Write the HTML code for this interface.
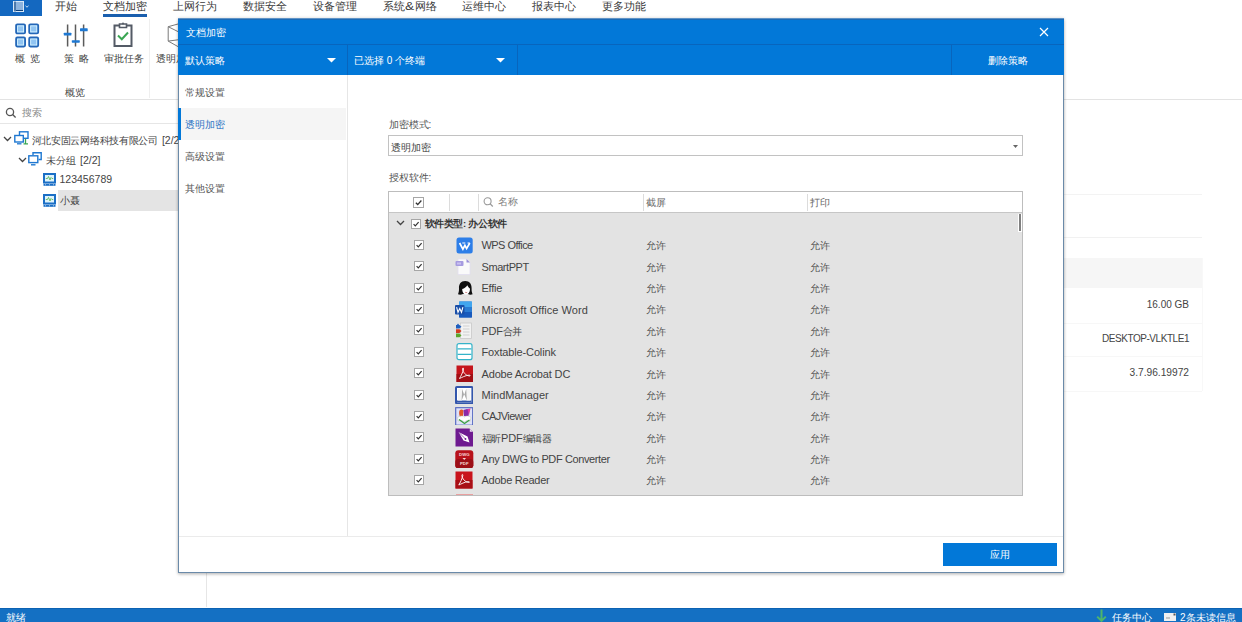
<!DOCTYPE html>
<html><head><meta charset="utf-8">
<style>
*{margin:0;padding:0;box-sizing:border-box}
html,body{width:1242px;height:622px;overflow:hidden;background:#fff;font-family:"Liberation Sans",sans-serif;color:#333}
body{position:relative}
.a{position:absolute;white-space:nowrap}
.mi{font-size:11px;line-height:12px;color:#3a3a3a;top:0}
.rl{font-size:10px;line-height:12px;color:#444}
.wt{color:#fff;font-size:10px;line-height:12px}
.t10{font-size:10px;line-height:12px;color:#555}
.nm{font-size:11px;line-height:12px;color:#444;letter-spacing:-0.45px}
.al{font-size:10px;line-height:12px;color:#555}
.ln{background:#e8e8e8}
</style></head><body>

<div class="a" style="left:0;top:0;width:42px;height:16px;background:#1468c0"></div>
<svg class="a" style="left:12px;top:0" width="20" height="13" viewBox="0 0 20 13"><rect x="1.5" y="1.5" width="10" height="10" fill="#8db3dd" stroke="#d8e8f8" stroke-width="1"/><path d="M3 1.5 V11.5" stroke="#0b3f7a" stroke-width="1"/><path d="M4 10.5 H11" stroke="#0b3f7a" stroke-width="1"/><path d="M13.5 5.8 L15 7.2 L16.5 5.8" fill="none" stroke="#cfe3f7" stroke-width="1"/></svg>
<div class="a mi" style="left:55px">开始</div>
<div class="a mi" style="left:103px">文档加密</div>
<div class="a mi" style="left:173px">上网行为</div>
<div class="a mi" style="left:243px">数据安全</div>
<div class="a mi" style="left:312.5px">设备管理</div>
<div class="a mi" style="left:382.5px">系统<span style="letter-spacing:0">&amp;</span>网络</div>
<div class="a mi" style="left:462px">运维中心</div>
<div class="a mi" style="left:532px">报表中心</div>
<div class="a mi" style="left:602px">更多功能</div>
<div class="a" style="left:103px;top:14px;width:44px;height:2.5px;background:#1a5fae"></div>
<style>.mi span{display:inline-block;transform:scaleX(1.25);margin:0 1.5px}</style>
<svg class="a" style="left:15px;top:23px" width="25" height="25" viewBox="0 0 25 25"><g fill="#90c4f2" stroke="#2467b8" stroke-width="1.8"><rect x="1.1" y="1.4" width="9" height="9" rx="1.2"/><rect x="14.2" y="1.4" width="9" height="9" rx="1.2"/><rect x="1.1" y="14.5" width="9" height="9" rx="1.2"/><rect x="14.2" y="14.5" width="9" height="9" rx="1.2"/></g><g fill="none" stroke="#d8f4ff" stroke-width="0.8"><rect x="2.6" y="2.9" width="6" height="6"/><rect x="15.7" y="2.9" width="6" height="6"/><rect x="2.6" y="16" width="6" height="6"/><rect x="15.7" y="16" width="6" height="6"/></g></svg>
<svg class="a" style="left:62px;top:22px" width="28" height="26" viewBox="0 0 28 26"><g stroke="#5b5b5b" stroke-width="1.5"><path d="M5.6 2.5 V24.5 M13.5 2.5 V24.5 M21.6 2.5 V24.5"/></g><g fill="#1e78d2"><rect x="1.8" y="10.7" width="7.6" height="2.8" rx="0.6"/><rect x="9.8" y="18.2" width="8" height="2.5" rx="0.6"/><rect x="18" y="6.3" width="7.7" height="3" rx="0.6"/></g></svg>
<svg class="a" style="left:112px;top:22px" width="22" height="26" viewBox="0 0 22 26"><path d="M7.5 3.5 H2.5 V24 H19.5 V3.5 H14.5" fill="none" stroke="#545b66" stroke-width="2"/><path d="M7.5 2 H14.5 V5.5 H7.5 Z" fill="none" stroke="#545b66" stroke-width="1.6"/><circle cx="11" cy="1.6" r="1" fill="#545b66"/><path d="M6 13.5 L9.8 17.2 L16 10.5" fill="none" stroke="#3aa653" stroke-width="2"/></svg>
<svg class="a" style="left:166px;top:22px" width="14" height="26" viewBox="0 0 14 26"><path d="M2.2 4.7 L12 2 M2.2 4.7 V19.1 L12 24.6 M2.2 4.7 L12 9.6 M2.2 19.1 L12 17.8" fill="none" stroke="#7a7a7a" stroke-width="1"/></svg>
<div class="a rl" style="left:15px;top:52.5px">概&ensp;览</div>
<div class="a rl" style="left:63.5px;top:52.5px">策&ensp;略</div>
<div class="a rl" style="left:104px;top:52.5px">审批任务</div>
<div class="a rl" style="left:155.5px;top:52.5px">透明加密</div>
<div class="a rl" style="left:64.5px;top:87px">概览</div>
<div class="a ln" style="left:149px;top:19px;width:1px;height:79px;background:#efefef"></div>
<div class="a ln" style="left:0;top:99px;width:1242px;height:1px;background:#e3e3e3"></div>
<svg class="a" style="left:5px;top:107px" width="12" height="12" viewBox="0 0 12 12"><circle cx="5" cy="5" r="3.6" fill="none" stroke="#555" stroke-width="1.3"/><path d="M7.6 7.6 L10.6 10.6" stroke="#555" stroke-width="1.4"/></svg>
<div class="a rl" style="left:22px;top:106.5px;color:#8a8a8a">搜索</div>
<div class="a ln" style="left:0;top:122.5px;width:206px;height:1px;background:#e6e6e6"></div>
<div class="a ln" style="left:206px;top:100px;width:1px;height:507px;background:#e6e6e6"></div>
<svg class="a" style="left:3px;top:135.5px" width="9" height="6" viewBox="0 0 9 6"><path d="M1 1 L4.5 4.5 L8 1" fill="none" stroke="#444" stroke-width="1.3"/></svg>
<svg class="a" style="left:14px;top:131px" width="15" height="14" viewBox="0 0 15 14"><rect x="5.5" y="0.8" width="8.5" height="6.5" fill="#fff" stroke="#1f78d1" stroke-width="1.4"/><rect x="0.8" y="4.5" width="8.5" height="6.5" fill="#fff" stroke="#1f78d1" stroke-width="1.4"/><path d="M3 12.8 H7.5" stroke="#1f78d1" stroke-width="1.3"/><path d="M11.5 8 V12.8 M9.5 12.8 H14" stroke="#3aa653" stroke-width="1.3"/></svg>
<div class="a rl" style="left:31.5px;top:133.5px;font-size:10px;color:#444;letter-spacing:-0.28px">河北安固云网络科技有限公司<span style="font-size:10.5px;margin-left:4px;letter-spacing:0">[2/2]</span></div>
<svg class="a" style="left:18px;top:157px" width="9" height="6" viewBox="0 0 9 6"><path d="M1 1 L4.5 4.5 L8 1" fill="none" stroke="#444" stroke-width="1.3"/></svg>
<svg class="a" style="left:28px;top:151.5px" width="14" height="14" viewBox="0 0 14 14"><path d="M5 3 V0.8 H13.2 V7.5 H10.5" fill="none" stroke="#1f78d1" stroke-width="1.4"/><rect x="0.8" y="3.8" width="9" height="6.8" fill="#fff" stroke="#1f78d1" stroke-width="1.4"/><path d="M3 12.8 H7.5" stroke="#1f78d1" stroke-width="1.4"/></svg>
<div class="a rl" style="left:45.5px;top:153.5px;font-size:9.75px;color:#444">未分组<span style="font-size:10.5px;margin-left:4.5px">[2/2]</span></div>
<div class="a" style="left:57.5px;top:189.5px;width:120.5px;height:21px;background:#e4e4e4"></div>
<svg class="a" style="left:43px;top:173px" width="13" height="13" viewBox="0 0 13 13"><rect x="1" y="1" width="11" height="8.5" fill="#dff3fb" stroke="#1b6fc6" stroke-width="2"/><path d="M2.8 5.5 H4.5 L5.5 3.5 L7 7 L8 4.5 L9 5.5 H10.2" fill="none" stroke="#5db85a" stroke-width="0.9"/><rect x="0.5" y="10.8" width="12" height="2" fill="#1b6fc6"/><path d="M2 11.8 H3 M6 11.8 H7 M10 11.8 H11" stroke="#cfe6f7" stroke-width="0.8"/></svg>
<svg class="a" style="left:43px;top:194px" width="13" height="13" viewBox="0 0 13 13"><rect x="1" y="1" width="11" height="8.5" fill="#dff3fb" stroke="#1b6fc6" stroke-width="2"/><path d="M2.8 5.5 H4.5 L5.5 3.5 L7 7 L8 4.5 L9 5.5 H10.2" fill="none" stroke="#5db85a" stroke-width="0.9"/><rect x="0.5" y="10.8" width="12" height="2" fill="#1b6fc6"/><path d="M2 11.8 H3 M6 11.8 H7 M10 11.8 H11" stroke="#cfe6f7" stroke-width="0.8"/></svg>
<div class="a rl" style="left:59.5px;top:173px;font-size:10.5px;color:#444">123456789</div>
<div class="a rl" style="left:60px;top:194.5px;font-size:10px;color:#444">小聂</div>
<div class="a" style="left:1063px;top:193.5px;width:139px;height:1px;background:#f3f3f3"></div>
<div class="a" style="left:1063px;top:237px;width:139px;height:1px;background:#f1f1f1"></div>
<div class="a" style="left:1063px;top:257.5px;width:139px;height:30px;background:#f6f6f6"></div>
<div class="a" style="left:1063px;top:322.5px;width:139px;height:1px;background:#f7f7f7"></div>
<div class="a" style="left:1063px;top:355.5px;width:139px;height:1px;background:#f7f7f7"></div>
<div class="a" style="left:1063px;top:390.5px;width:139px;height:1px;background:#f7f7f7"></div>
<div class="a" style="left:1201.5px;top:257.5px;width:1px;height:133px;background:#f8f8f8"></div>
<div class="a" style="right:53px;top:299px;font-size:10px;line-height:12px;color:#444;letter-spacing:0px">16.00 GB</div>
<div class="a" style="right:53px;top:333px;font-size:10px;line-height:12px;color:#444;letter-spacing:-0.45px">DESKTOP-VLKTLE1</div>
<div class="a" style="right:53px;top:366.5px;font-size:10.2px;line-height:12px;color:#444;letter-spacing:0px">3.7.96.19972</div>
<div class="a" style="left:0;top:608px;width:1242px;height:14px;background:#1470c3"></div>
<div class="a" style="left:0;top:608px;width:1242px;height:1px;background:#0c62b3"></div>
<div class="a wt" style="left:6px;top:611.5px;font-size:10px">就绪</div>
<svg class="a" style="left:1096px;top:609px" width="11" height="13" viewBox="0 0 11 13"><path d="M5.5 0.5 V12 M1.2 7.6 L5.5 11.9 L9.8 7.6" fill="none" stroke="#4fb56a" stroke-width="2"/></svg>
<div class="a wt" style="left:1112px;top:611.5px;font-size:10px">任务中心</div>
<svg class="a" style="left:1164px;top:612.5px" width="12" height="8" viewBox="0 0 12 8"><rect x="0" y="0" width="12" height="8" fill="#f0f0f0"/><path d="M2 5 H6" stroke="#999" stroke-width="1"/><rect x="9.5" y="0.5" width="2" height="2" fill="#555"/></svg>
<div class="a wt" style="left:1180px;top:611.5px;font-size:10px">2条未读信息</div>
<div class="a" style="left:178px;top:18px;width:886px;height:555px;background:#fff;border:1px solid #6a8aa9;box-shadow:0 1.5px 3px rgba(0,0,0,.2), 0 0 3px rgba(0,0,0,.16)"></div>
<div class="a" style="left:178px;top:18px;width:886px;height:57px;background:#0278d8"></div>
<div class="a" style="left:178px;top:18px;width:886px;height:1px;background:#5f93c6"></div>
<div class="a" style="left:178px;top:19px;width:886px;height:1px;background:#1c6ab5"></div>
<div class="a" style="left:178px;top:44px;width:886px;height:1px;background:#0865bd"></div>
<div class="a wt" style="left:185.5px;top:26.5px">文档加密</div>
<svg class="a" style="left:1039px;top:27px" width="10" height="10" viewBox="0 0 10 10"><path d="M1 1 L9 9 M9 1 L1 9" stroke="#fff" stroke-width="1.2"/></svg>
<div class="a wt" style="left:185px;top:55px">默认策略</div>
<svg class="a" style="left:327px;top:58px" width="9" height="5" viewBox="0 0 9 5"><path d="M0 0 H9 L4.5 4.5 Z" fill="#fff"/></svg>
<svg class="a" style="left:496px;top:58px" width="9" height="5" viewBox="0 0 9 5"><path d="M0 0 H9 L4.5 4.5 Z" fill="#fff"/></svg>
<div class="a" style="left:347px;top:45px;width:1px;height:30px;background:#0865bd"></div>
<div class="a" style="left:516.5px;top:45px;width:1px;height:30px;background:#0865bd"></div>
<div class="a" style="left:951px;top:45px;width:1px;height:30px;background:#0865bd"></div>
<div class="a wt" style="left:354px;top:55px">已选择 0 个终端</div>
<div class="a wt" style="left:988px;top:54.5px">删除策略</div>
<div class="a" style="left:347px;top:75px;width:1px;height:461px;background:#e6e6e6"></div>
<div class="a" style="left:179px;top:108px;width:167px;height:32px;background:#f5f5f5"></div>
<div class="a" style="left:178px;top:108px;width:2.5px;height:32px;background:#0278d8"></div>
<div class="a t10" style="left:185px;top:86.5px;color:#555">常规设置</div>
<div class="a t10" style="left:185px;top:118.8px;color:#2b72c4">透明加密</div>
<div class="a t10" style="left:185px;top:151px;color:#555">高级设置</div>
<div class="a t10" style="left:185px;top:183px;color:#555">其他设置</div>
<div class="a t10" style="left:388.5px;top:118.5px">加密模式:</div>
<div class="a" style="left:388px;top:135px;width:635px;height:21px;border:1px solid #c2c2c2;background:#fff"></div>
<div class="a t10" style="left:390.5px;top:141.5px;color:#444">透明加密</div>
<svg class="a" style="left:1013px;top:144.5px" width="5" height="3" viewBox="0 0 5 3"><path d="M0 0 H5 L2.5 3 Z" fill="#666"/></svg>
<div class="a t10" style="left:388.5px;top:171.5px">授权软件:</div>
<div class="a" style="left:388px;top:191px;width:635px;height:305px;border:1px solid #bdbdbd;background:#e3e3e3"></div>
<div class="a" style="left:389px;top:192px;width:633px;height:20px;background:#fff"></div>
<div class="a" style="left:389px;top:212px;width:633px;height:1px;background:#c6c6c6"></div>
<div class="a" style="left:449px;top:194px;width:1px;height:17px;background:#dcdcdc"></div>
<div class="a" style="left:478px;top:194px;width:1px;height:17px;background:#dcdcdc"></div>
<div class="a" style="left:642.5px;top:194px;width:1px;height:17px;background:#dcdcdc"></div>
<div class="a" style="left:807px;top:194px;width:1px;height:17px;background:#dcdcdc"></div>
<div class="a" style="left:413px;top:197px;width:11px;height:11px;border:1px solid #a6a6a6;background:#fff"></div><svg class="a" style="left:413px;top:197px" width="11" height="11" viewBox="0 0 10 10"><path d="M2.6 5.2 L4.3 6.9 L7.6 3.2" fill="none" stroke="#333" stroke-width="1.2"/></svg>
<svg class="a" style="left:482.5px;top:196.5px" width="11" height="11" viewBox="0 0 11 11"><circle cx="4.6" cy="4.3" r="3.5" fill="none" stroke="#999" stroke-width="1.1"/><path d="M7.2 6.9 L9.8 9.5" stroke="#999" stroke-width="1.3"/></svg>
<div class="a al" style="left:498px;top:195.8px;color:#808080">名称</div>
<div class="a al" style="left:646px;top:196.5px;color:#666">截屏</div>
<div class="a al" style="left:810px;top:196.5px;color:#666">打印</div>
<div class="a" style="left:1018px;top:213.5px;width:4px;height:18px;background:#fff"></div>
<div class="a" style="left:1019px;top:214px;width:2px;height:17px;background:#808080"></div>
<svg class="a" style="left:395.5px;top:220px" width="9" height="6" viewBox="0 0 9 6"><path d="M1 1 L4.5 4.5 L8 1" fill="none" stroke="#444" stroke-width="1.3"/></svg>
<div class="a" style="left:410.5px;top:218.5px;width:10px;height:10px;border:1px solid #a6a6a6;background:#fff"></div><svg class="a" style="left:410.5px;top:218.5px" width="10" height="10" viewBox="0 0 10 10"><path d="M2.6 5.2 L4.3 6.9 L7.6 3.2" fill="none" stroke="#333" stroke-width="1.2"/></svg>
<div class="a" style="left:424.5px;top:218.3px;font-size:9.5px;line-height:12px;color:#333;font-weight:bold;letter-spacing:-0.35px">软件类型: 办公软件</div>
<div class="a" style="left:414px;top:239.9px;width:10px;height:10px;border:1px solid #a6a6a6;background:#fff"></div><svg class="a" style="left:414px;top:239.9px" width="10" height="10" viewBox="0 0 10 10"><path d="M2.6 5.2 L4.3 6.9 L7.6 3.2" fill="none" stroke="#333" stroke-width="1.2"/></svg>
<svg class="a" style="left:455.5px;top:236.6px" width="17" height="17" viewBox="0 0 17 17"><rect x="0.5" y="0.5" width="16.2" height="16" rx="2.5" fill="#2d7ee8"/><path d="M3.6 6 L6.9 12.2 L8.9 8.4 L10.6 11.6 L13.8 6" fill="none" stroke="#fff" stroke-width="1.7" stroke-linejoin="miter"/><path d="M6.3 6 H9.3 M11.5 6 H13.6" stroke="#fff" stroke-width="1"/></svg>
<div class="a nm" style="left:481.5px;top:239.4px;letter-spacing:-0.55px">WPS Office</div>
<div class="a al" style="left:646px;top:240.3px">允许</div>
<div class="a al" style="left:809.8px;top:240.3px">允许</div>
<div class="a" style="left:414px;top:261.2px;width:10px;height:10px;border:1px solid #a6a6a6;background:#fff"></div><svg class="a" style="left:414px;top:261.2px" width="10" height="10" viewBox="0 0 10 10"><path d="M2.6 5.2 L4.3 6.9 L7.6 3.2" fill="none" stroke="#333" stroke-width="1.2"/></svg>
<svg class="a" style="left:455px;top:258.2px" width="17" height="17" viewBox="0 0 17 17"><path d="M3 1 H11.5 L15 4.5 V16.5 H3 Z" fill="#fafafa" stroke="#e2def0" stroke-width="0.8"/><path d="M11.5 1 L15 4.5 H11.5 Z" fill="#9b8fd8"/><rect x="0.5" y="3" width="8" height="5" rx="1" fill="#a69be0"/><rect x="2" y="4.5" width="4" height="2" fill="#c9c1f0"/></svg>
<div class="a nm" style="left:481.5px;top:260.7px;letter-spacing:-0.43px">SmartPPT</div>
<div class="a al" style="left:646px;top:261.6px">允许</div>
<div class="a al" style="left:809.8px;top:261.6px">允许</div>
<div class="a" style="left:414px;top:282.6px;width:10px;height:10px;border:1px solid #a6a6a6;background:#fff"></div><svg class="a" style="left:414px;top:282.6px" width="10" height="10" viewBox="0 0 10 10"><path d="M2.6 5.2 L4.3 6.9 L7.6 3.2" fill="none" stroke="#333" stroke-width="1.2"/></svg>
<svg class="a" style="left:456.8px;top:279.8px" width="17" height="17" viewBox="0 0 17 17"><path d="M8.2 1 C3.8 1 1.8 4.2 2 8.2 C2.1 11 1.6 12.8 1 14.2 C2.8 15 4.6 14.6 5.8 14 L11 14 C12.2 14.6 14 15 15.6 14.2 C15 12.8 14.5 11 14.6 8.2 C14.8 4.2 12.6 1 8.2 1 Z" fill="#111"/><path d="M5.2 9 C7.5 8.5 9.3 6.8 10.3 5.2 C11.2 7 12.3 8.2 13 8.6 C13 12.2 11.4 14.6 9.2 14.6 C6.9 14.6 5.2 12.3 5.2 9 Z" fill="#fff"/><path d="M8.2 12.3 Q9.2 12.9 10.2 12.3" stroke="#a33" stroke-width="0.6" fill="none"/></svg>
<div class="a nm" style="left:481.5px;top:282.1px;letter-spacing:-0.25px">Effie</div>
<div class="a al" style="left:646px;top:283.0px">允许</div>
<div class="a al" style="left:809.8px;top:283.0px">允许</div>
<div class="a" style="left:414px;top:304.0px;width:10px;height:10px;border:1px solid #a6a6a6;background:#fff"></div><svg class="a" style="left:414px;top:304.0px" width="10" height="10" viewBox="0 0 10 10"><path d="M2.6 5.2 L4.3 6.9 L7.6 3.2" fill="none" stroke="#333" stroke-width="1.2"/></svg>
<svg class="a" style="left:455px;top:300.5px" width="18" height="17" viewBox="0 0 18 17"><rect x="4" y="0.5" width="13" height="16" rx="1" fill="#2b6fd0"/><rect x="4" y="0.5" width="13" height="5.5" fill="#41a5ee"/><rect x="4" y="6" width="13" height="5" fill="#2b7cd3"/><rect x="4" y="11" width="13" height="5.5" fill="#185abd"/><rect x="0" y="4" width="9.5" height="9.5" rx="1" fill="#1a4fa8"/><path d="M1.6 6.2 L3 11.3 L4.75 7.5 L6.5 11.3 L7.9 6.2" fill="none" stroke="#fff" stroke-width="1.1"/></svg>
<div class="a nm" style="left:481.5px;top:303.5px;letter-spacing:0.05px">Microsoft Office Word</div>
<div class="a al" style="left:646px;top:304.4px">允许</div>
<div class="a al" style="left:809.8px;top:304.4px">允许</div>
<div class="a" style="left:414px;top:325.4px;width:10px;height:10px;border:1px solid #a6a6a6;background:#fff"></div><svg class="a" style="left:414px;top:325.4px" width="10" height="10" viewBox="0 0 10 10"><path d="M2.6 5.2 L4.3 6.9 L7.6 3.2" fill="none" stroke="#333" stroke-width="1.2"/></svg>
<svg class="a" style="left:455px;top:321.7px" width="18" height="18" viewBox="0 0 18 18"><rect x="5.5" y="1" width="11" height="15.5" fill="#f2f2f2" stroke="#c9c9c9" stroke-width="0.8"/><path d="M8 4 H14.5 M8 7 H14.5 M8 10 H14.5 M8 13 H14.5" stroke="#d0d0d0" stroke-width="1"/><path d="M1 3 H4.5 L6.5 4.8 L4.5 6.6 H1 Z" fill="#1f5fbf"/><path d="M1 7.3 H4.5 L6.5 9.1 L4.5 10.9 H1 Z" fill="#d23a1e"/><path d="M1 11.6 H4.5 L6.5 13.4 L4.5 15.2 H1 Z" fill="#5aa52a"/><path d="M3 1.5 L4.2 3 H1.8 Z" fill="#1f5fbf"/></svg>
<div class="a nm" style="left:481.5px;top:324.9px;letter-spacing:-0.3px">PDF<span style="font-size:10px">合并</span></div>
<div class="a al" style="left:646px;top:325.8px">允许</div>
<div class="a al" style="left:809.8px;top:325.8px">允许</div>
<div class="a" style="left:414px;top:346.7px;width:10px;height:10px;border:1px solid #a6a6a6;background:#fff"></div><svg class="a" style="left:414px;top:346.7px" width="10" height="10" viewBox="0 0 10 10"><path d="M2.6 5.2 L4.3 6.9 L7.6 3.2" fill="none" stroke="#333" stroke-width="1.2"/></svg>
<svg class="a" style="left:455.5px;top:343.2px" width="17" height="17.5" viewBox="0 0 17 17.5"><rect x="1" y="0.7" width="15" height="16" rx="2" fill="#fff" stroke="#34b3c9" stroke-width="1.2"/><path d="M1.6 5.9 H15.4 M1.6 11.3 H15.4" stroke="#34b3c9" stroke-width="1.2"/></svg>
<div class="a nm" style="left:481.5px;top:346.2px;letter-spacing:-0.14px">Foxtable-Colink</div>
<div class="a al" style="left:646px;top:347.1px">允许</div>
<div class="a al" style="left:809.8px;top:347.1px">允许</div>
<div class="a" style="left:414px;top:368.1px;width:10px;height:10px;border:1px solid #a6a6a6;background:#fff"></div><svg class="a" style="left:414px;top:368.1px" width="10" height="10" viewBox="0 0 10 10"><path d="M2.6 5.2 L4.3 6.9 L7.6 3.2" fill="none" stroke="#333" stroke-width="1.2"/></svg>
<svg class="a" style="left:455.5px;top:364.6px" width="17.5" height="17.5" viewBox="0 0 17.5 17.5"><rect x="0.5" y="0.5" width="16.5" height="16.5" fill="#c5141b"/><rect x="0.5" y="9" width="16.5" height="8" fill="#a10f15"/><path d="M3.5 13.5 C5 11 7 7 7.5 4 C7.7 2.7 6.5 2.5 6.6 4 C6.8 7 9.5 10.5 13.5 11 C14.5 11.1 14.5 10 13 10.1 C9 10.5 6 12.5 3.5 13.5 Z" fill="none" stroke="#fff" stroke-width="0.9"/></svg>
<div class="a nm" style="left:481.5px;top:367.6px;letter-spacing:-0.15px">Adobe Acrobat DC</div>
<div class="a al" style="left:646px;top:368.5px">允许</div>
<div class="a al" style="left:809.8px;top:368.5px">允许</div>
<div class="a" style="left:414px;top:389.5px;width:10px;height:10px;border:1px solid #a6a6a6;background:#fff"></div><svg class="a" style="left:414px;top:389.5px" width="10" height="10" viewBox="0 0 10 10"><path d="M2.6 5.2 L4.3 6.9 L7.6 3.2" fill="none" stroke="#333" stroke-width="1.2"/></svg>
<svg class="a" style="left:455px;top:385.5px" width="18" height="18" viewBox="0 0 18 18"><rect x="1" y="1" width="16.4" height="16.4" rx="0.8" fill="#fff" stroke="#3356ac" stroke-width="2"/><rect x="2" y="14.5" width="14.4" height="2" fill="#3356ac"/><path d="M3 3 H7.2 L9.2 9 L11.2 3 H15.4 V14.5 H11.6 L9.2 8 L6.8 14.5 H3 Z" fill="#f4f4f4"/><path d="M7.2 3 L9.2 9 L11.2 3 L11.8 14.5 L9.2 8 L6.6 14.5 Z" fill="#a9a9a9"/></svg>
<div class="a nm" style="left:481.5px;top:389.0px;letter-spacing:0px">MindManager</div>
<div class="a al" style="left:646px;top:389.9px">允许</div>
<div class="a al" style="left:809.8px;top:389.9px">允许</div>
<div class="a" style="left:414px;top:410.8px;width:10px;height:10px;border:1px solid #a6a6a6;background:#fff"></div><svg class="a" style="left:414px;top:410.8px" width="10" height="10" viewBox="0 0 10 10"><path d="M2.6 5.2 L4.3 6.9 L7.6 3.2" fill="none" stroke="#333" stroke-width="1.2"/></svg>
<svg class="a" style="left:455px;top:406.8px" width="18" height="18.5" viewBox="0 0 18 18.5"><rect x="0.7" y="0.7" width="17" height="17.5" fill="#dfe2f7" stroke="#4d62c0" stroke-width="1.1"/><path d="M4.5 3.5 C6 2 8 2.5 8.5 4 L8 9 L5 9.5 C4 8 3.8 5.5 4.5 3.5 Z" fill="#e0562a"/><path d="M8.5 3 L12 2 L14.5 2.5 L13.5 9 L9 9 Z" fill="#8a2aa8"/><path d="M12.5 2 L15.5 1.5 L14 8" fill="#e03aa0"/><path d="M2.5 10.5 C5.5 8.5 9 8.5 9.5 10 C11 8.5 14 8.5 16 10.5 L15 14.5 C12.5 13 10.5 13.5 9.5 15 C8 13.5 5.5 13 3 14 Z" fill="#fff" stroke="#b8c0b0" stroke-width="0.5"/><path d="M4 12.5 L9.5 16.5 L14.5 13" stroke="#3aa040" stroke-width="1.3" fill="none"/></svg>
<div class="a nm" style="left:481.5px;top:410.3px;letter-spacing:-0.52px">CAJViewer</div>
<div class="a al" style="left:646px;top:411.2px">允许</div>
<div class="a al" style="left:809.8px;top:411.2px">允许</div>
<div class="a" style="left:414px;top:432.2px;width:10px;height:10px;border:1px solid #a6a6a6;background:#fff"></div><svg class="a" style="left:414px;top:432.2px" width="10" height="10" viewBox="0 0 10 10"><path d="M2.6 5.2 L4.3 6.9 L7.6 3.2" fill="none" stroke="#333" stroke-width="1.2"/></svg>
<svg class="a" style="left:454.7px;top:427.9px" width="18.5" height="19" viewBox="0 0 18.5 19"><path d="M0.5 0.5 H14.5 L18 4 V18.5 H0.5 Z" fill="#6e1a90"/><path d="M14.8 0.8 L17.7 3.7 H14.8 Z" fill="#e6d6ee"/><path d="M3.5 4 L12.5 8.5 L14.5 14.5 L8.5 12.5 Z" fill="#fff"/><path d="M3.5 4 L10.5 11" stroke="#6e1a90" stroke-width="0.7"/><circle cx="10.5" cy="11" r="0.9" fill="#6e1a90"/></svg>
<div class="a nm" style="left:481.5px;top:431.7px;letter-spacing:-0.2px"><span style="font-size:10px">福昕</span>PDF<span style="font-size:10px">编辑器</span></div>
<div class="a al" style="left:646px;top:432.6px">允许</div>
<div class="a al" style="left:809.8px;top:432.6px">允许</div>
<div class="a" style="left:414px;top:453.6px;width:10px;height:10px;border:1px solid #a6a6a6;background:#fff"></div><svg class="a" style="left:414px;top:453.6px" width="10" height="10" viewBox="0 0 10 10"><path d="M2.6 5.2 L4.3 6.9 L7.6 3.2" fill="none" stroke="#333" stroke-width="1.2"/></svg>
<svg class="a" style="left:455px;top:449.6px" width="18.5" height="18.5" viewBox="0 0 18.5 18.5"><rect x="0.3" y="0.3" width="18" height="18" rx="3" fill="#b8121b"/><rect x="0.3" y="9" width="18" height="9.3" rx="3" fill="#9c0f17"/><text x="9.3" y="6" font-size="4.3" font-weight="bold" fill="#f6d6d6" text-anchor="middle" font-family="Liberation Sans">DWG</text><path d="M7.5 8 H11 L9.25 10 Z" fill="#f6d6d6"/><text x="9.3" y="15.3" font-size="4.3" font-weight="bold" fill="#f6d6d6" text-anchor="middle" font-family="Liberation Sans">PDF</text></svg>
<div class="a nm" style="left:481.5px;top:453.1px;letter-spacing:-0.39px">Any DWG to PDF Converter</div>
<div class="a al" style="left:646px;top:454.0px">允许</div>
<div class="a al" style="left:809.8px;top:454.0px">允许</div>
<div class="a" style="left:414px;top:474.9px;width:10px;height:10px;border:1px solid #a6a6a6;background:#fff"></div><svg class="a" style="left:414px;top:474.9px" width="10" height="10" viewBox="0 0 10 10"><path d="M2.6 5.2 L4.3 6.9 L7.6 3.2" fill="none" stroke="#333" stroke-width="1.2"/></svg>
<svg class="a" style="left:455.3px;top:471.4px" width="18" height="18" viewBox="0 0 18 18"><rect x="0.5" y="0.5" width="17" height="17" fill="#c9141c"/><rect x="0.5" y="9" width="17" height="8.5" fill="#a80f16"/><path d="M3.8 14 C5.3 11.5 7.3 7.5 7.8 4.5 C8 3.2 6.8 3 6.9 4.5 C7.1 7.5 9.8 11 13.8 11.5 C14.8 11.6 14.8 10.5 13.3 10.6 C9.3 11 6.3 13 3.8 14 Z" fill="none" stroke="#fff" stroke-width="0.9"/></svg>
<div class="a nm" style="left:481.5px;top:474.4px;letter-spacing:-0.25px">Adobe Reader</div>
<div class="a al" style="left:646px;top:475.3px">允许</div>
<div class="a al" style="left:809.8px;top:475.3px">允许</div>
<div class="a" style="left:456px;top:493.5px;width:17px;height:1.5px;background:#e9a0a0"></div>
<div class="a" style="left:179px;top:536px;width:884px;height:1px;background:#ebebeb"></div>
<div class="a" style="left:943px;top:543px;width:113.5px;height:22.5px;background:#0278d8"></div>
<div class="a wt" style="left:990px;top:549px;font-size:10px">应用</div>
</body></html>
